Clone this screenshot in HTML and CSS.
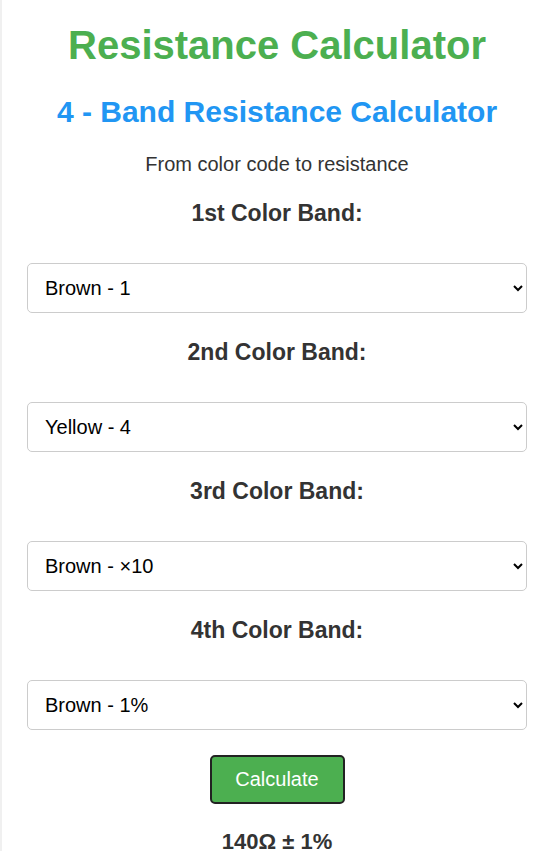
FILE: index.html
```html
<!DOCTYPE html>
<html>
<head>
<meta charset="utf-8">
<link rel="stylesheet" href="styles.css">
</head>
<body>
<div class="page">
  <h1 class="title">Resistance Calculator</h1>
  <h2 class="subtitle">4 - Band Resistance Calculator</h2>
  <p class="lead">From color code to resistance</p>
  <div class="band">
    <label class="band-label" for="b1">1st Color Band:</label>
    <select class="band-select" id="b1"><option>Brown - 1</option></select>
  </div>
  <div class="band">
    <label class="band-label" for="b2">2nd Color Band:</label>
    <select class="band-select" id="b2"><option>Yellow - 4</option></select>
  </div>
  <div class="band">
    <label class="band-label" for="b3">3rd Color Band:</label>
    <select class="band-select" id="b3"><option>Brown - ×10</option></select>
  </div>
  <div class="band">
    <label class="band-label" for="b4">4th Color Band:</label>
    <select class="band-select" id="b4"><option>Brown - 1%</option></select>
  </div>
  <button class="calc-btn">Calculate</button>
  <div class="result">140Ω ± 1%</div>
</div>
</body>
</html>
```
FILE: styles.css
```css
html, body {
  margin: 0;
  padding: 0;
  background: #f0f0f0;
  font-family: "Liberation Sans", Arial, sans-serif;
  color: #333;
}
.page {
  margin-left: 2px;
  background: #fff;
  min-height: 851px;
  padding: 0 25px;
  display: flex;
  flex-direction: column;
  align-items: center;
  text-align: center;
}
.title {
  margin: 22px 0 0;
  font-size: 40px;
  line-height: 46px;
  color: #4CAF50;
  font-weight: bold;
}
.subtitle {
  margin: 26px 0 0;
  font-size: 30px;
  line-height: 35px;
  color: #2196F3;
  font-weight: bold;
}
.lead {
  margin: 24px 0 0;
  font-size: 20px;
  line-height: 23px;
}
.band {
  width: 100%;
  display: flex;
  flex-direction: column;
  align-items: center;
}
.band-label {
  display: block;
  margin: 26px 0 0;
  font-size: 23px;
  line-height: 26px;
  font-weight: bold;
}
.band:first-of-type .band-label { margin-top: 24px; }
.band-select {
  margin-top: 37px;
  width: 500px;
  height: 50px;
  padding: 0 13px;
  font-family: "Liberation Sans", Arial, sans-serif;
  font-size: 20px;
  color: #000;
  background: #fff;
  border: 1px solid #ccc;
  border-radius: 5px;
}
.calc-btn {
  margin-top: 25px;
  width: 135px;
  height: 49px;
  background: #4CAF50;
  color: #fff;
  border: 2px solid #222;
  border-radius: 5px;
  font-family: "Liberation Sans", Arial, sans-serif;
  font-size: 20px;
}
.result {
  margin-top: 25px;
  font-size: 22px;
  line-height: 25px;
  font-weight: bold;
}
```
